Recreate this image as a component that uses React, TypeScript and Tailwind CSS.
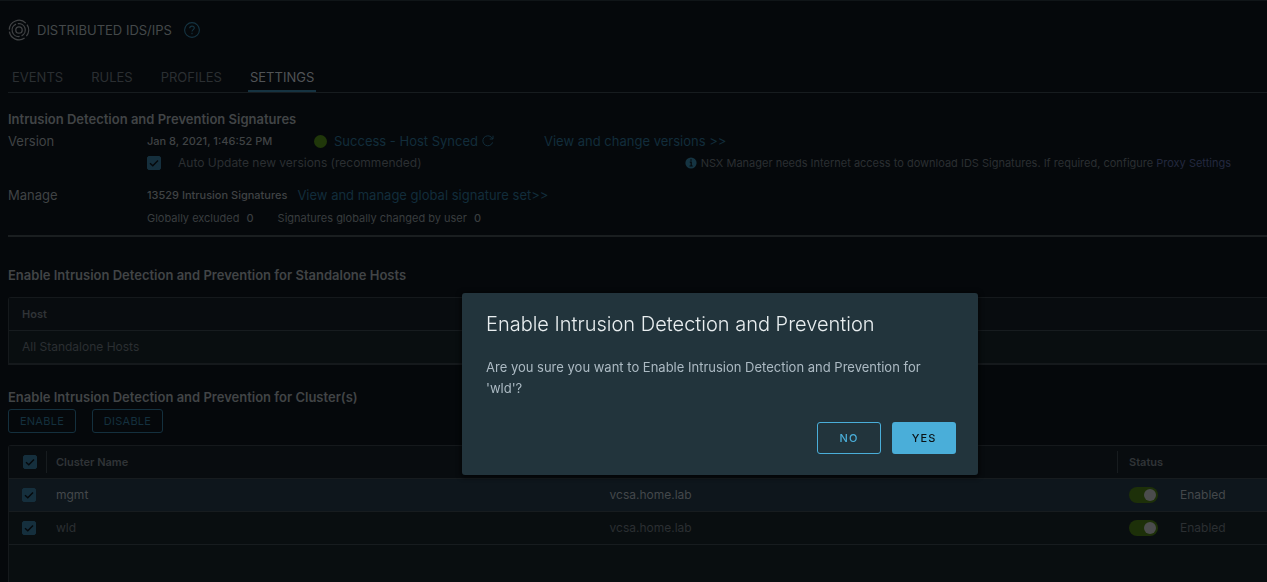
import { useState } from 'react'
import type { ReactNode } from 'react'

const tabs = ['EVENTS', 'RULES', 'PROFILES', 'SETTINGS']

const clusters = [
  { name: 'mgmt', manager: 'vcsa.home.lab', highlighted: true },
  { name: 'wld', manager: 'vcsa.home.lab', highlighted: false },
]

function Checkbox({ id, label }: { id: string; label?: string }) {
  return (
    <span className="grid h-[14px] w-[14px] flex-shrink-0">
      <input
        id={id}
        type="checkbox"
        defaultChecked
        aria-label={label}
        className="peer col-start-1 row-start-1 h-[14px] w-[14px] appearance-none rounded-[2px] border border-[#152f3d] checked:bg-[#152f3d]"
      />
      <svg
        viewBox="0 0 14 14"
        className="pointer-events-none col-start-1 row-start-1 hidden h-[14px] w-[14px] peer-checked:block"
        fill="none"
        stroke="#05080b"
        strokeWidth="1.4"
      >
        <path d="M3 7.2 5.8 9.8 11 4.6" />
      </svg>
    </span>
  )
}

function Toggle({ label }: { label: string }) {
  return (
    <input
      type="checkbox"
      role="switch"
      defaultChecked
      aria-label={label}
      className="block h-4 w-[29px] appearance-none rounded-full bg-[#2a2e31] px-0.5 py-0.5 before:block before:h-3 before:w-3 before:rounded-full before:bg-[#4b4c4d] checked:bg-[#1d3009] checked:before:ml-[13px]"
    />
  )
}

function SectionTitle({ children }: { children: ReactNode }) {
  return <h2 className="text-[13px] leading-5 font-semibold text-[#414446]">{children}</h2>
}

function TargetIcon() {
  return (
    <svg viewBox="0 0 22 22" className="h-[22px] w-[22px]" fill="none" stroke="#414345" strokeWidth="1.3">
      <circle cx="11" cy="11" r="3.2" />
      <path d="M8 5.2A6.4 6.4 0 0 0 11.6 17.4M13.6 16.8A6.4 6.4 0 0 0 9.8 4.7" />
      <path d="M1.4 12.6A9.7 9.7 0 0 0 16.6 19M18.4 17.2A9.7 9.7 0 0 0 19 5.6M17.8 4.1A9.7 9.7 0 0 0 1.3 10.6" />
    </svg>
  )
}

export default function App() {
  const [open, setOpen] = useState(true)

  return (
    <div className="flex min-h-screen flex-col border-t border-[#101518] bg-[#05080b] pl-2 font-['Inter',sans-serif] text-[13px] leading-5 text-[#2b2f32]">
      {/* Page header */}
      <header className="flex h-[58px] items-center">
        <TargetIcon />
        <h1 className="ml-[7px] text-[13px] text-[#44484a]">DISTRIBUTED IDS/IPS</h1>
        <button type="button" aria-label="Help" className="ml-3">
          <svg viewBox="0 0 16 16" className="h-4 w-4" fill="none" stroke="#153442" strokeWidth="1.1">
            <circle cx="8" cy="8" r="7.4" />
            <path d="M5.7 6.2C5.8 4.8 6.7 4.1 8 4.1S10.3 4.9 10.3 6.1C10.3 7.6 8 7.8 8 9.6M8 10.8V12.2" />
          </svg>
        </button>
      </header>

      {/* Tabs */}
      <nav className="flex h-[34px] items-end gap-6 border-b border-[#171c1f] pl-0.5">
        {tabs.map((tab) => (
          <a
            key={tab}
            href={`#${tab.toLowerCase()}`}
            aria-current={tab === 'SETTINGS' ? 'page' : undefined}
            className="border-b-2 border-transparent px-0.5 pb-[3px] aria-[current=page]:border-[#163341] aria-[current=page]:text-[#505356]"
          >
            {tab}
          </a>
        ))}
      </nav>

      {/* Signatures */}
      <section className="border-b-2 border-[#1a1e20] pt-4 pb-[7px]">
        <SectionTitle>Intrusion Detection and Prevention Signatures</SectionTitle>

        <div className="mt-0.5 flex items-center text-[#404345]">
          <span className="w-[139px]">Version</span>
          <span className="w-[167px] text-[11px] font-medium">Jan 8, 2021, 1:46:52 PM</span>
          <div className="flex w-[230px] items-center">
            <span className="h-[13px] w-[13px] rounded-full bg-[#20370a]" />
            <a href="#status" className="ml-[7px] text-[#122d3b]">
              Success - Host Synced
            </a>
            <button type="button" aria-label="Refresh" className="ml-1">
              <svg viewBox="0 0 12 12" className="h-3 w-3" fill="none" stroke="#122d3b" strokeWidth="1">
                <path d="M10.6 7.4A5 5 0 1 1 9.7 2.6L11 4M11 .7V4H7.7" />
              </svg>
            </button>
          </div>
          <a href="#versions" className="text-[#122d3b]">
            View and change versions &gt;&gt;
          </a>
        </div>

        <div className="mt-0.5 flex items-center justify-between pr-9 pl-[139px]">
          <div className="flex items-center gap-[17px]">
            <Checkbox id="auto-update" />
            <label htmlFor="auto-update" className="text-[12px]">
              Auto Update new versions (recommended)
            </label>
          </div>
          <p className="flex items-center gap-1 text-[11px]">
            <svg viewBox="0 0 12 12" className="h-3 w-3">
              <circle cx="6" cy="6" r="5.6" fill="#153442" />
              <path d="M6 2.3V3.8M4.8 5.2H6.2V8.9M4.5 9H7.7" fill="none" stroke="#05080b" strokeWidth="1.2" />
            </svg>
            <span>
              NSX Manager needs Internet access to download IDS Signatures. If required, configure{' '}
              <a href="#proxy" className="text-[#23283f]">
                Proxy Settings
              </a>
            </span>
          </p>
        </div>

        <div className="mt-3 flex items-center text-[#404345]">
          <span className="w-[139px]">Manage</span>
          <span className="text-[11px] font-medium">13529 Intrusion Signatures</span>
          <a href="#signatures" className="ml-2.5 text-[#122d3b]">
            View and manage global signature set&gt;&gt;
          </a>
        </div>

        <div className="mt-[3px] flex items-center gap-6 pl-[139px] text-[11px] text-[#393d3f]">
          <span>
            Globally excluded <b className="ml-1 font-medium">0</b>
          </span>
          <span>
            Signatures globally changed by user <b className="ml-1 font-medium">0</b>
          </span>
        </div>
      </section>

      {/* Standalone hosts */}
      <section className="pt-7">
        <SectionTitle>Enable Intrusion Detection and Prevention for Standalone Hosts</SectionTitle>
        <div className="mt-3 rounded-tl-[3px] border-t border-b-2 border-l border-[#15191c]">
          <table className="w-full bg-[#080c0f] text-left">
            <thead>
              <tr className="h-8 border-b border-[#171c1f]">
                <th className="pl-[13px] text-[11px] font-semibold text-[#303437]">Host</th>
              </tr>
            </thead>
            <tbody>
              <tr className="h-[33px] bg-[#090e10]">
                <td className="pl-[13px] text-[12px]">All Standalone Hosts</td>
              </tr>
            </tbody>
          </table>
        </div>
      </section>

      {/* Clusters */}
      <section className="flex flex-1 flex-col pt-[22px]">
        <SectionTitle>Enable Intrusion Detection and Prevention for Cluster(s)</SectionTitle>
        <div className="mt-0.5 flex gap-4 text-[11px] tracking-wide text-[#14303e]">
          <button type="button" className="h-6 w-[68px] rounded-[3px] border border-[#14303e]">
            ENABLE
          </button>
          <button type="button" className="h-6 w-[71px] rounded-[3px] border border-[#14303e]">
            DISABLE
          </button>
        </div>
        <div className="mt-3 flex-1 rounded-tl-[3px] border-t border-l border-[#15191c] bg-[#090e10]">
          <table className="w-full table-fixed text-left">
            <thead>
              <tr className="h-8 border-b border-[#171c1f] bg-[#080c0f] text-[11px] text-[#303437]">
                <th className="w-[37px] pl-[14px]">
                  <Checkbox id="all-clusters" label="Select all clusters" />
                </th>
                <th className="w-[44%] font-semibold">
                  <span className="block border-l border-[#171c1f] pl-[9px] leading-[22px]">Cluster Name</span>
                </th>
                <th aria-label="Manager" />
                <th className="w-[150px] font-semibold">
                  <span className="block border-l border-[#171c1f] pl-[11px] leading-[22px]">Status</span>
                </th>
              </tr>
            </thead>
            <tbody className="text-[12px]">
              {clusters.map((cluster) => (
                <tr
                  key={cluster.name}
                  className={
                    cluster.highlighted
                      ? 'h-[33px] border-b border-[#171c1f] bg-[#0e161c] text-[#44484b]'
                      : 'h-[33px] border-b border-[#171c1f]'
                  }
                >
                  <td className="pl-[13px]">
                    <Checkbox id={`select-${cluster.name}`} label={`Select ${cluster.name}`} />
                  </td>
                  <td className="pl-2.5">{cluster.name}</td>
                  <td className="pl-2.5">{cluster.manager}</td>
                  <td className="pl-3">
                    <span className="flex items-center gap-[22px]">
                      <Toggle label={`Status of ${cluster.name}`} />
                      Enabled
                    </span>
                  </td>
                </tr>
              ))}
            </tbody>
          </table>
        </div>
      </section>

      {open && (
        <div className="fixed inset-0 flex items-center justify-center pt-[186px] pl-[173px]">
          <div
            role="dialog"
            aria-modal="true"
            aria-labelledby="confirm-title"
            className="w-full max-w-[516px] rounded-[3px] bg-[#22343c] pt-[18px] pr-[22px] pb-[21px] pl-6 shadow-[0_1px_4px_2px_rgba(0,0,0,0.5)]"
          >
            <h2 id="confirm-title" className="text-[20px] leading-[26px] font-light text-[#e9eef0]">
              Enable Intrusion Detection and Prevention
            </h2>
            <p className="mt-5 text-[13px] leading-[21px] text-[#acbac3]">
              Are you sure you want to Enable Intrusion Detection and Prevention for &apos;wld&apos;?
            </p>
            <div className="mt-[23px] flex justify-end gap-[11px] text-[11px] font-medium tracking-widest">
              <button
                type="button"
                onClick={() => setOpen(false)}
                className="h-8 w-16 rounded-[3px] border border-[#4aaed9] text-[#4aaed9]"
              >
                NO
              </button>
              <button
                type="button"
                onClick={() => setOpen(false)}
                className="h-8 w-16 rounded-[3px] bg-[#4aaed9] text-[#0b1215]"
              >
                YES
              </button>
            </div>
          </div>
        </div>
      )}
    </div>
  )
}
